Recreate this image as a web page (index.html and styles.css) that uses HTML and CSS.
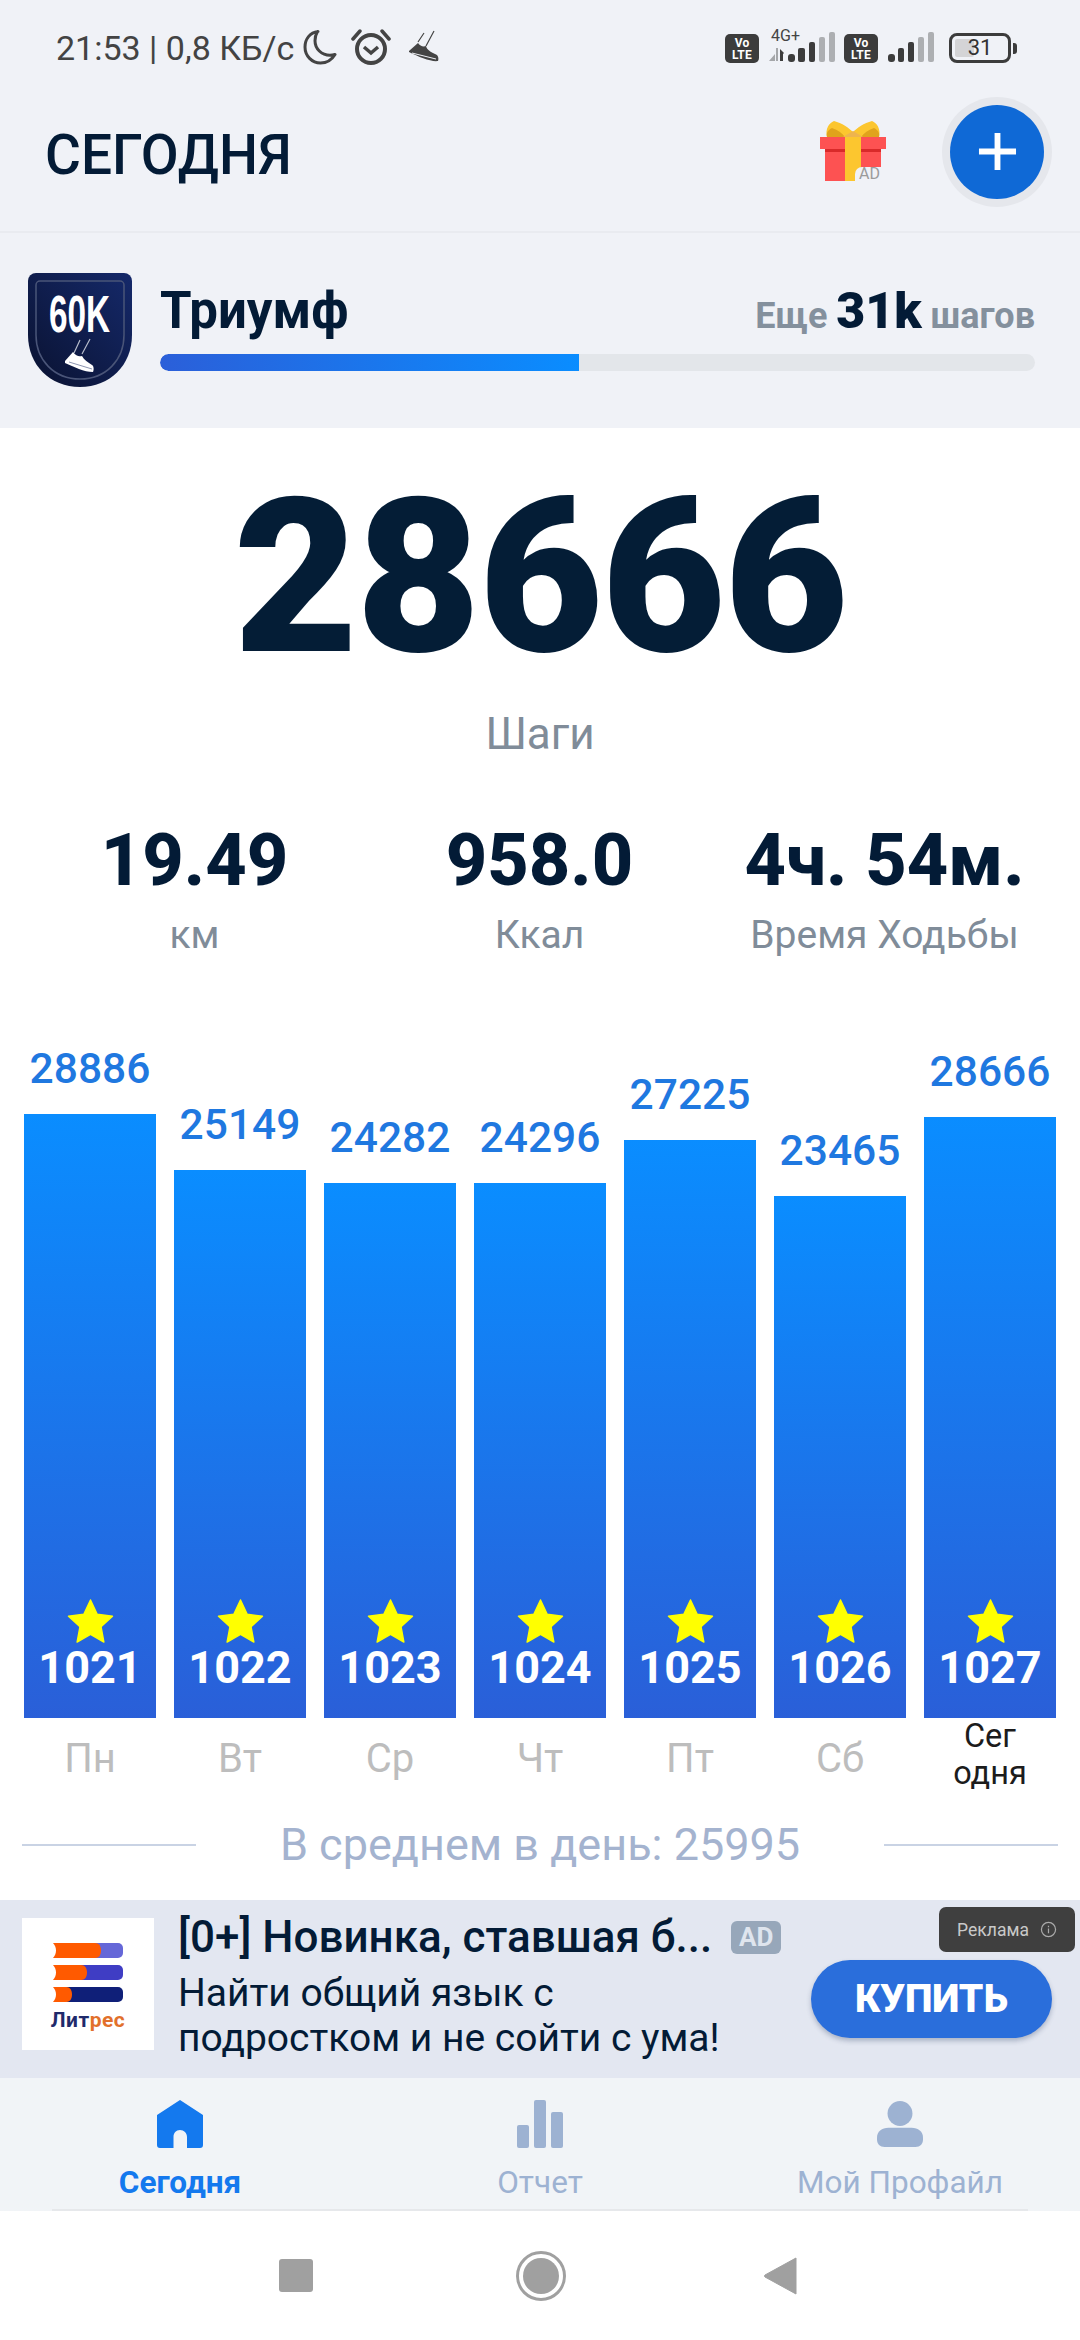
FILE: index.html
```html
<!DOCTYPE html>
<html lang="ru">
<head>
<meta charset="utf-8">
<title>Сегодня</title>
<link rel="stylesheet" href="styles.css">
</head>
<body>
<div class="page">
  <header class="top">
    <div class="status">
      <div class="status-left">
        <span class="clock">21:53 | 0,8 КБ/с</span>
        <svg class="ic-moon" viewBox="0 0 34 36"><path d="M15 2.5C7 3.5 2 10 2 18c0 9 7 16 15.5 16 6.5 0 11.5-3.5 14.5-8.5-1.5.5-3 .8-5 .8-8.5 0-15-6.5-15-14.5 0-3.5 1-6.8 2.5-9.3z" fill="none" stroke="#444" stroke-width="3" stroke-linejoin="round"/></svg>
        <svg class="ic-alarm" viewBox="0 0 40 36"><circle cx="20" cy="20" r="14" fill="none" stroke="#444" stroke-width="4"/><path d="M13 18l7 6 7-6" fill="none" stroke="#444" stroke-width="3.5"/><path d="M2 10L9 2M31 2l7 8" stroke="#444" stroke-width="3.5" stroke-linecap="round"/></svg>
        <svg class="ic-shoe" viewBox="0 0 30 33"><path d="M25 1L17 16M15 3L9 12" stroke="#444" stroke-width="1.2" fill="none"/><path d="M0 21L9 13C11 16 14 17 17 16C18 20 22 22 26 24C29 25 30 28 29 31C22 32 10 27 0 22Z" fill="#444"/><path d="M3 23L27 29" stroke="#f0f2f7" stroke-width="1"/></svg>
      </div>
      <div class="status-right">
        <span class="volte">Vo<br>LTE</span>
        <span class="net">
          <span class="net-label">4G+</span>
          <svg class="ic-sig1" viewBox="0 0 66 32"><path d="M0 30l6-7v7zM7 17h2v13H7z" fill="#a5a7aa"/><path d="M11 18l4 4-1 1v7h-3z" fill="#3c3c3c"/><rect x="19" y="23" width="7" height="8" rx="3" fill="#3c3c3c"/><rect x="29" y="17" width="7" height="14" rx="2" fill="#3c3c3c"/><rect x="40" y="11" width="6" height="20" rx="2" fill="#3c3c3c"/><rect x="50" y="6" width="6" height="25" rx="2" fill="#adafb2"/><rect x="60" y="1" width="6" height="30" rx="2" fill="#adafb2"/></svg>
        </span>
        <span class="volte">Vo<br>LTE</span>
        <svg class="ic-sig2" viewBox="0 0 48 32"><rect x="1" y="23" width="7" height="8" rx="3" fill="#3c3c3c"/><rect x="11" y="17" width="6" height="14" rx="2" fill="#3c3c3c"/><rect x="21" y="11" width="6" height="20" rx="2" fill="#3c3c3c"/><rect x="31" y="6" width="6" height="25" rx="2" fill="#adafb2"/><rect x="41" y="1" width="6" height="30" rx="2" fill="#adafb2"/></svg>
        <span class="battery"><span class="battery-fill"></span><span class="battery-num">31</span></span>
        <span class="battery-tip"></span>
      </div>
    </div>
    <div class="toolbar">
      <h1 class="title">СЕГОДНЯ</h1>
      <div class="actions">
        <span class="gift">
          <svg viewBox="0 0 66 60"><path d="M7 16C5 8 9 2 14 0C22 2 29 7 33 11C37 7 44 2 52 0C57 2 61 8 59 16Z" fill="#fcc62f"/><path d="M7 16C6 12 8 9 12 7C18 9 22 12 25 16ZM59 16C60 12 58 9 54 7C48 9 44 12 41 16Z" fill="#e0a31c"/><path d="M23 16L33 10L43 16Z" fill="#eeb44e"/><rect x="5" y="28" width="56" height="32" fill="#fd5252"/><rect x="0" y="16" width="66" height="12" fill="#fd5252"/><rect x="5" y="28" width="56" height="3" fill="#d92a2a"/><rect x="25" y="16" width="16" height="44" fill="#fcc62f"/></svg>
          <span class="gift-ad">AD</span>
        </span>
        <span class="fab"><svg viewBox="0 0 40 40"><path d="M20 1v38M1 20h38" stroke="#fff" stroke-width="6"/></svg></span>
      </div>
    </div>
    <div class="goal">
      <svg class="badge" viewBox="0 0 104 114">
        <defs><linearGradient id="bg" x1="1" y1="0" x2="0" y2="1"><stop offset="0" stop-color="#15296a"/><stop offset="1" stop-color="#0a1230"/></linearGradient></defs>
        <path d="M8 0h88a8 8 0 0 1 8 8v54c0 30-22 52-52 52S0 92 0 62V8a8 8 0 0 1 8-8z" fill="url(#bg)"/>
        <path d="M12 8h80a4 4 0 0 1 4 4v50c0 25-18 44-44 44S8 87 8 62V12a4 4 0 0 1 4-4z" fill="none" stroke="#4a5578" stroke-width="1.5"/>
        <text x="21" y="59" textLength="61" lengthAdjust="spacingAndGlyphs" class="badge-text">60K</text>
        <path d="M52 67L46 80M62 66L54 81" stroke="#b8bdcc" stroke-width="1.2" fill="none"/>
        <path d="M37 88L45 79C48 83 51 84 54 83C56 87 60 89 64 92C66 93 66 97 65 99C56 99 46 94 37 90Z" fill="#fff"/>
        <path d="M41 89L64 96" stroke="#8d95b0" stroke-width="1"/>
      </svg>
      <div class="goal-body">
        <div class="goal-head">
          <span class="goal-name">Триумф</span>
          <span class="goal-left">Еще <b>31k</b> шагов</span>
        </div>
        <div class="track"><div class="track-fill"></div></div>
      </div>
    </div>
  </header>

  <main class="main">
    <div class="steps">28666</div>
    <div class="steps-label">Шаги</div>
    <div class="stats">
      <div class="stat"><div class="stat-val">19.49</div><div class="stat-label">км</div></div>
      <div class="stat"><div class="stat-val">958.0</div><div class="stat-label">Ккал</div></div>
      <div class="stat"><div class="stat-val">4ч. 54м.</div><div class="stat-label">Время Ходьбы</div></div>
    </div>
    <div class="chart">
      <div class="col"><span class="col-val">28886</span><div class="bar" style="height:604px"><svg class="star" viewBox="0 0 48 46"><path d="M24 1l7 15 16 2-12 11 3 16-14-8-14 8 3-16L1 18l16-2z" fill="#ffff00" stroke="#ffff00" stroke-width="1.5" stroke-linejoin="round"/></svg><span class="bar-num">1021</span></div><div class="col-day">Пн</div></div>
      <div class="col"><span class="col-val">25149</span><div class="bar" style="height:548px"><svg class="star" viewBox="0 0 48 46"><path d="M24 1l7 15 16 2-12 11 3 16-14-8-14 8 3-16L1 18l16-2z" fill="#ffff00" stroke="#ffff00" stroke-width="1.5" stroke-linejoin="round"/></svg><span class="bar-num">1022</span></div><div class="col-day">Вт</div></div>
      <div class="col"><span class="col-val">24282</span><div class="bar" style="height:535px"><svg class="star" viewBox="0 0 48 46"><path d="M24 1l7 15 16 2-12 11 3 16-14-8-14 8 3-16L1 18l16-2z" fill="#ffff00" stroke="#ffff00" stroke-width="1.5" stroke-linejoin="round"/></svg><span class="bar-num">1023</span></div><div class="col-day">Ср</div></div>
      <div class="col"><span class="col-val">24296</span><div class="bar" style="height:535px"><svg class="star" viewBox="0 0 48 46"><path d="M24 1l7 15 16 2-12 11 3 16-14-8-14 8 3-16L1 18l16-2z" fill="#ffff00" stroke="#ffff00" stroke-width="1.5" stroke-linejoin="round"/></svg><span class="bar-num">1024</span></div><div class="col-day">Чт</div></div>
      <div class="col"><span class="col-val">27225</span><div class="bar" style="height:578px"><svg class="star" viewBox="0 0 48 46"><path d="M24 1l7 15 16 2-12 11 3 16-14-8-14 8 3-16L1 18l16-2z" fill="#ffff00" stroke="#ffff00" stroke-width="1.5" stroke-linejoin="round"/></svg><span class="bar-num">1025</span></div><div class="col-day">Пт</div></div>
      <div class="col"><span class="col-val">23465</span><div class="bar" style="height:522px"><svg class="star" viewBox="0 0 48 46"><path d="M24 1l7 15 16 2-12 11 3 16-14-8-14 8 3-16L1 18l16-2z" fill="#ffff00" stroke="#ffff00" stroke-width="1.5" stroke-linejoin="round"/></svg><span class="bar-num">1026</span></div><div class="col-day">Сб</div></div>
      <div class="col"><span class="col-val">28666</span><div class="bar" style="height:601px"><svg class="star" viewBox="0 0 48 46"><path d="M24 1l7 15 16 2-12 11 3 16-14-8-14 8 3-16L1 18l16-2z" fill="#ffff00" stroke="#ffff00" stroke-width="1.5" stroke-linejoin="round"/></svg><span class="bar-num">1027</span></div><div class="col-day col-today">Сег<br>одня</div></div>
    </div>
    <div class="avg"><span class="avg-line"></span><span class="avg-text">В среднем в день: 25995</span><span class="avg-line"></span></div>
  </main>

  <section class="ad">
    <div class="ad-logo">
      <svg class="ad-books" viewBox="0 0 70 60">
        <rect x="30" y="0" width="40" height="15" rx="5" fill="#6567d8"/><path d="M0 0h42c4 0 6 3 6 7.5s-2 7.5-6 7.5H0c2-2 3-5 3-7.5S2 2 0 0z" fill="#ff5a00"/>
        <rect x="20" y="22" width="50" height="15" rx="5" fill="#3f3dc4"/><path d="M0 22h28c4 0 6 3 6 7.5s-2 7.5-6 7.5H0c2-2 3-5 3-7.5S2 24 0 22z" fill="#ff5a00"/>
        <rect x="10" y="44" width="60" height="15" rx="5" fill="#0f1f78"/><path d="M0 44h13c4 0 6 3 6 7.5s-2 7.5-6 7.5H0c2-2 3-5 3-7.5S2 46 0 44z" fill="#ff5a00"/>
      </svg>
      <div class="ad-brand">Лит<span class="ad-brand-o">рес</span></div>
    </div>
    <div class="ad-text">
      <div class="ad-title-row"><span class="ad-title">[0+] Новинка, ставшая б...</span><span class="ad-tag">AD</span></div>
      <div class="ad-sub">Найти общий язык с<br>подростком и не сойти с ума!</div>
    </div>
    <button class="buy">КУПИТЬ</button>
    <div class="ad-note"><span>Реклама</span><svg viewBox="0 0 18 18"><circle cx="9" cy="9" r="7.5" fill="none" stroke="#aaa" stroke-width="1.3"/><path d="M9 8v5M9 5v1.5" stroke="#aaa" stroke-width="1.3"/></svg></div>
  </section>

  <nav class="tabs">
    <div class="tab tab-on"><svg viewBox="0 0 46 48"><path d="M23 0L46 15V45C46 47 45 48 43 48H30V37C30 33 27 30 23 30S16.5 33 16.5 37V48H3C1 48 0 47 0 45V15Z" fill="#1479ee"/></svg><span>Сегодня</span></div>
    <div class="tab"><svg viewBox="0 0 46 48"><rect x="0" y="25" width="12" height="23" rx="2" fill="#9db2d2"/><rect x="17" y="0" width="12" height="48" rx="2" fill="#9db2d2"/><rect x="34" y="12" width="12" height="36" rx="2" fill="#9db2d2"/></svg><span>Отчет</span></div>
    <div class="tab"><svg viewBox="0 0 48 48"><ellipse cx="24" cy="13" rx="13" ry="13" fill="#9db2d2"/><path d="M12 28h24c7 0 12 4 12 10v2c0 5-3 8-8 8H8c-5 0-8-3-8-8v-2c0-6 5-10 12-10z" fill="#9db2d2"/></svg><span>Мой Профайл</span></div>
  </nav>

  <footer class="sysnav">
    <span class="sys-square"></span>
    <svg class="sys-home" viewBox="0 0 50 50"><circle cx="25" cy="25" r="23.5" fill="none" stroke="#a0a0a0" stroke-width="3"/><circle cx="25" cy="25" r="18" fill="#a0a0a0"/></svg>
    <svg class="sys-back" viewBox="0 0 34 38"><path d="M32 1v36L1 20q-1-1 0-2z" fill="#a0a0a0" stroke="#a0a0a0" stroke-width="1" stroke-linejoin="round"/></svg>
  </footer>
</div>
</body>
</html>
```

FILE: styles.css
```css
* { box-sizing: border-box; }
html, body { margin: 0; padding: 0; }
body { font-family: Roboto, "Liberation Sans", sans-serif; background: #fff; }
.page { width: 1080px; height: 2340px; display: flex; flex-direction: column; overflow: hidden; }

.top { background: #f0f2f7; height: 428px; flex: none; display: flex; flex-direction: column; }

.status { height: 90px; padding: 28px 63px 0 56px; display: flex; justify-content: space-between; align-items: flex-start; }
.status-left { display: flex; align-items: center; height: 40px; }
.clock { font-size: 34px; color: #434343; line-height: 40px; white-space: nowrap; }
.ic-moon { width: 34px; height: 36px; margin-left: 9px; margin-top: -3px; }
.ic-alarm { width: 40px; height: 36px; margin-left: 14px; margin-top: -3px; }
.ic-shoe { width: 30px; height: 33px; margin-left: 18px; margin-top: -3px; }
.status-right { display: flex; align-items: flex-end; height: 32px; margin-top: 3px; }
.volte { width: 34px; height: 29px; background: #3c3c3c; border-radius: 5px; color: #fff; font-size: 12px; font-weight: 700; line-height: 12px; text-align: center; padding-top: 3px; letter-spacing: .2px; }
.net { position: relative; width: 66px; height: 32px; margin: 0 9px 0 10px; }
.net-label { position: absolute; left: 2px; top: -2px; font-size: 16px; line-height: 14px; color: #444; }
.ic-sig1 { width: 66px; height: 32px; display: block; }
.ic-sig2 { width: 48px; height: 32px; margin-left: 9px; }
.battery { position: relative; width: 62px; height: 30px; border: 3px solid #3c3c3c; border-radius: 8px; margin-left: 14px; display: block; }
.battery-fill { position: absolute; left: 3px; top: 3px; bottom: 3px; width: 34%; background: #d4d4d6; border-radius: 2px; }
.battery-num { position: absolute; inset: 0; text-align: center; font-size: 22px; line-height: 24px; color: #333; }
.battery-tip { width: 4px; height: 11px; background: #3c3c3c; border-radius: 0 3px 3px 0; margin: 0 0 9px 2px; }

.toolbar { height: 143px; padding: 0 36px 18px 45px; display: flex; justify-content: space-between; align-items: center; border-bottom: 2px solid #e9ebf0; }
.title { margin: 7px 0 0; font-size: 55px; font-weight: 500; color: #031b36; line-height: 60px; }
.actions { display: flex; align-items: center; }
.gift { position: relative; width: 66px; height: 60px; display: block; margin-top: -1px; }
.gift svg { width: 66px; height: 60px; display: block; }
.gift-ad { position: absolute; right: 5px; bottom: 0; background: #f0f2f7; color: #9b9b9b; font-size: 16px; line-height: 14px; padding: 0 1px 0 4px; border-radius: 7px 0 0 0; }
.fab { width: 94px; height: 94px; margin-left: 64px; border-radius: 50%; background: #0f69d6; box-shadow: 0 0 0 8px #e5e7ec; display: flex; align-items: center; justify-content: center; }
.fab svg { width: 39px; height: 39px; }

.goal { flex: 1; padding: 40px 45px 0 28px; display: flex; align-items: flex-start; }
.badge { width: 104px; height: 114px; flex: none; overflow: visible; }
.badge-text { font-family: "Liberation Sans Narrow", "Liberation Sans", sans-serif; font-size: 51px; font-weight: 700; fill: #fff; }
.goal-body { flex: 1; margin-left: 28px; }
.goal-head { display: flex; justify-content: space-between; align-items: baseline; height: 66px; padding-top: 8px; }
.goal-name { font-size: 51px; font-weight: 700; color: #031b36; line-height: 60px; }
.goal-left { font-size: 36px; font-weight: 700; color: #84909d; }
.goal-left b { font-size: 50px; color: #031b36; }
.track { height: 17px; margin-top: 15px; background: #e3e6ea; border-radius: 9px; overflow: hidden; }
.track-fill { width: 419px; height: 100%; border-radius: 9px 0 0 9px; background: linear-gradient(90deg, #2b5fd9, #0a8dff); }

.main { flex: 1; background: #fff; display: flex; flex-direction: column; min-height: 0; }
.steps { font-size: 215px; font-weight: 900; letter-spacing: -2px; color: #041d36; line-height: 244px; text-align: center; margin-top: 28px; }
.steps-label { font-size: 44px; color: #808c99; text-align: center; line-height: 50px; margin-top: 9px; }
.stats { display: grid; grid-template-columns: repeat(3, 345px); padding: 0 0 0 22px; margin-top: 63px; }
.stat { text-align: center; }
.stat-val { font-size: 72px; font-weight: 800; color: #031b36; line-height: 78px; white-space: nowrap; }
.stat-label { font-size: 39px; color: #808c99; line-height: 46px; margin-top: 12px; }

.chart { height: 842px; display: flex; gap: 18px; padding: 0 24px; align-items: flex-end; flex: none; }
.col { width: 132px; flex: none; display: flex; flex-direction: column; align-items: center; }
.col-val { font-size: 42.5px; font-weight: 500; color: #1f78e0; line-height: 48px; margin-bottom: 21px; }
.bar { width: 132px; background: linear-gradient(180deg, #0a8dff 0%, #2a5fd8 100%); display: flex; flex-direction: column; align-items: center; justify-content: flex-end; }
.star { width: 47px; height: 44px; display: block; }
.bar-num { font-size: 45px; font-weight: 700; color: #fff; line-height: 50px; margin-bottom: 25px; }
.col-day { height: 82px; font-size: 40px; color: #bdbdbd; line-height: 48px; text-align: center; padding-top: 17px; }
.col-today { font-size: 32.5px; line-height: 37px; color: #1c1c1c; padding-top: 0; }

.avg { display: flex; align-items: center; justify-content: space-between; padding: 0 22px; margin-top: 20px; }
.avg-line { width: 174px; height: 2px; background: #c9d3e4; }
.avg-text { font-size: 45px; color: #a4b3cf; line-height: 50px; }

.ad { position: relative; height: 178px; flex: none; background: #e3e7f1; display: flex; padding: 18px 28px 0 22px; }
.ad-logo { width: 132px; height: 132px; background: #fff; flex: none; display: flex; flex-direction: column; align-items: center; padding-top: 25px; }
.ad-books { width: 70px; height: 60px; display: block; }
.ad-brand { font-size: 21px; font-weight: 700; color: #1f2a6b; line-height: 20px; margin-top: 7px; letter-spacing: .5px; }
.ad-brand-o { color: #e2702b; }
.ad-text { flex: 1; margin-left: 24px; margin-top: -9px; min-width: 0; }
.ad-title-row { display: flex; align-items: center; height: 56px; }
.ad-title { font-size: 44px; font-weight: 500; color: #031b36; white-space: nowrap; }
.ad-tag { margin-left: 19px; width: 50px; height: 33px; border-radius: 6px; background: #97a7ba; color: #dfe5ee; font-size: 26px; font-weight: 700; line-height: 33px; text-align: center; }
.ad-sub { font-size: 39px; color: #031b36; line-height: 45px; margin-top: 6px; white-space: nowrap; }
.buy { width: 241px; height: 78px; border: 0; border-radius: 39px; background: #2a6edb; color: #fff; font: 900 39px Roboto, sans-serif; box-shadow: 0 3px 5px rgba(40,60,100,.3); margin-top: 42px; flex: none; }
.ad-note { position: absolute; left: 939px; top: 7px; width: 136px; height: 45px; background: #3f3f3f; border-radius: 7px; display: flex; align-items: center; justify-content: center; gap: 11px; font-size: 17.5px; color: #c9c9c9; }
.ad-note svg { width: 17px; height: 17px; }

.tabs { height: 133px; flex: none; background: #f1f4f7; display: grid; grid-template-columns: 360px 360px 360px; position: relative; }
.tabs::after { content: ""; position: absolute; left: 52px; right: 52px; bottom: 0; height: 2px; background: #e6e8eb; }
.tab { display: flex; flex-direction: column; align-items: center; padding-top: 22px; font-size: 31.5px; color: #9db2d2; }
.tab svg { width: 46px; height: 48px; display: block; }
.tab span { line-height: 36px; margin-top: 17px; }
.tab-on { color: #1479ee; font-weight: 700; }

.sysnav { height: 129px; flex: none; background: #fff; position: relative; display: flex; align-items: center; padding-left: 279px; }
.sys-square { width: 34px; height: 33px; border-radius: 3px; background: #a0a0a0; }
.sys-home { width: 50px; height: 50px; margin-left: 203px; }
.sys-back { width: 34px; height: 38px; margin-left: 198px; }
```
